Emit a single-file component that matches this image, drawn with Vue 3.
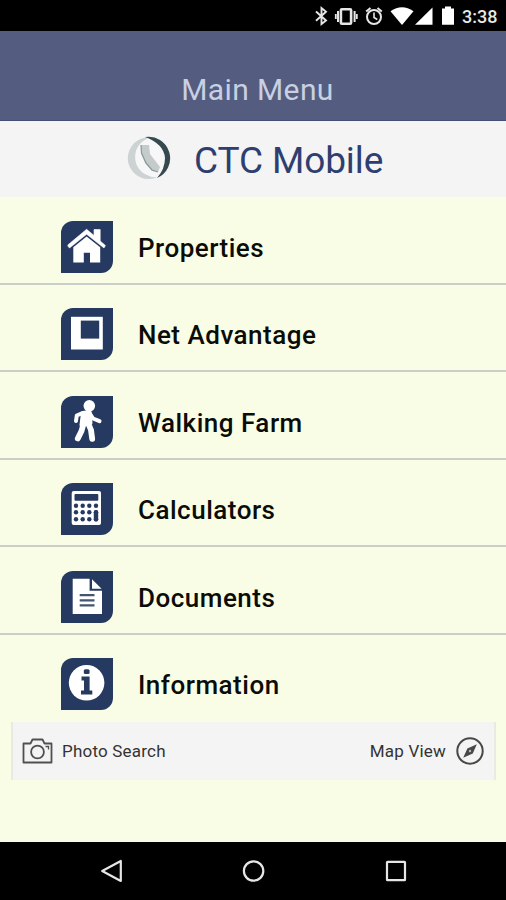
<script setup>
import { ref } from "vue";

const time = ref("3:38");

const menuItems = ref([
  { id: "properties", label: "Properties" },
  { id: "net", label: "Net Advantage" },
  { id: "farm", label: "Walking Farm" },
  { id: "calculators", label: "Calculators" },
  { id: "documents", label: "Documents" },
  { id: "information", label: "Information" }
]);

// Key positions on the calculator icon
const keyCols = [15, 21.7, 28.3, 35];
const keyRows = [22.7, 29.3, 36.3];
</script>

<template>
  <div class="screen">
    <div class="status">
      <svg width="146" height="31" viewBox="0 0 146 31">
        <g fill="none" stroke="#e6e6e6">
          <path d="M-0.5 11.5L9.5 20.5L5 24V8L9.5 11.8L-0.5 20.8" transform="translate(0.5 0)" stroke-width="1.9" />
          <rect x="25.5" y="9.2" width="10.2" height="14.6" rx="1" transform="translate(-0.6 0)" stroke-width="2.6" />
          <path d="M22 11V22M38.6 11V22" stroke-width="2" />
          <path d="M19.8 14V19M40.8 14V19" stroke-width="1.8" />
          <circle cx="58" cy="17" r="7" stroke-width="2" />
          <path d="M58 12.5V17.5L61.3 19.5" stroke-width="1.6" />
          <path d="M50.2 11.5L54.5 8M65.8 11.5L61.5 8" stroke-width="2" />
        </g>
        <g fill="#fff" transform="translate(-6 0)">
          <path d="M80.5 11.2Q92 3.2 103.5 11.2L92 25Z" />
          <path d="M122.5 7.5V24.8H105Z" />
          <path d="M132 8.5H135V6.5H141V8.5H144V24.8H132Z" />
        </g>
      </svg>
      <span class="time">{{ time }}</span>
    </div>

    <header class="header">Main Menu</header>

    <div class="brand">
      <svg class="logo" width="46" height="44" viewBox="0 0 46 44">
        <circle cx="22.5" cy="22" r="20.5" fill="#f7f7f7" />
        <path d="M20 1.2A21 21 0 1 0 31 41Q25 42 20 39A17.5 19 0 0 1 20 3Z" fill="#cdd2d3" />
        <path d="M18 1A21.5 21.5 0 0 1 30 42Q38 33 38 22Q37 8 18 1Z" fill="#35494f" />
        <path d="M14 9H22L23 18L33 31L31 36L25 35L18 27L14 17Z" fill="#c5caca" />
        <path d="M14 9L14.5 17L19 27L25 34L31 36" fill="none" stroke="#8e9898" stroke-width="1.2" />
      </svg>
      <span>CTC Mobile</span>
    </div>

    <ul class="menu">
      <li v-for="item in menuItems" :key="item.id">
        <span class="tile">
          <svg width="52" height="52" viewBox="0 0 52 52">
            <g v-if="item.id === 'properties'" fill="#fff">
              <path d="M7.2 25.6L6.8 24L25.6 8.3L33 14.5V8.5H39.2V20L44.4 24.5L43 27L25.6 13.2L8.5 27Z" stroke="#fff" stroke-width="0.6" />
              <path d="M12.3 26.3L25.6 15.6L39.2 26.3V41.6H29V31.7H22.8V41.6H12.3Z" />
            </g>
            <g v-else-if="item.id === 'net'">
              <rect x="10" y="8.8" width="31.8" height="32.7" fill="#fff" />
              <rect x="19.8" y="12.6" width="18.4" height="18" fill="#263a61" />
            </g>
            <g v-else-if="item.id === 'farm'" fill="none" stroke="#fff" stroke-linecap="round" stroke-linejoin="round">
              <circle cx="28.3" cy="9.8" r="5.8" fill="#fff" stroke="none" />
              <path d="M22 17L28.5 16L29.5 27L20.5 29Z" fill="#fff" stroke-width="4" />
              <path d="M21.5 17L15.8 19.5L15 25M28.5 17L32 22.5L38.5 25.2" stroke-width="4" />
              <path d="M22.5 28L20.5 35L16.8 42.5M27.5 28L30 34L31.2 42.8" stroke-width="5.8" />
            </g>
            <g v-else-if="item.id === 'calculators'">
              <rect x="10.7" y="8" width="29.3" height="34" rx="2" fill="#fff" />
              <rect x="13.5" y="11" width="23.8" height="6.8" rx="1" fill="#263a61" />
              <g fill="#263a61">
                <template v-for="y in keyRows">
                  <circle v-for="x in keyCols" :key="x + '-' + y" :cx="x" :cy="y" r="2.2" />
                </template>
                <rect x="32.8" y="27.1" width="4.4" height="11.4" rx="2.2" />
              </g>
            </g>
            <g v-else-if="item.id === 'documents'">
              <path d="M11.7 7.7H28.6V19.8H41V43H11.7Z" fill="#fff" />
              <path d="M31 8.2L40.6 17.8H31Z" fill="#fff" />
              <path d="M18.7 24.2H33.5M18.7 29.3H33.5M18.7 34.3H33.5" stroke="#46546f" stroke-width="2.3" />
            </g>
            <g v-else>
              <circle cx="25.6" cy="24.8" r="17.8" fill="#fff" />
              <rect x="22.8" y="11.2" width="5.8" height="4.8" rx="1.5" fill="#263a61" />
              <path d="M20.5 18.6H28.6V32.5H31.3V36.6H20V32.5H23V22.4H20.5Z" fill="#263a61" />
            </g>
          </svg>
        </span>
        <span class="label">{{ item.label }}</span>
      </li>
    </ul>

    <div class="tools">
      <button>
        <svg width="32" height="28" viewBox="0 0 32 28" fill="none" stroke="#505050" stroke-width="1.8">
          <path d="M1.5 6.5H8.5L10.5 2.5H20.5L22.5 6.5H29.5V25.5H1.5Z" stroke-linejoin="round" />
          <circle cx="15.5" cy="15" r="6.4" />
          <path d="M23.5 9.5H26.5V12.5" stroke-width="1.3" />
        </svg>
        <span>Photo Search</span>
      </button>
      <button class="map">
        <span>Map View</span>
        <svg width="28" height="28" viewBox="0 0 28 28">
          <circle cx="14" cy="14" r="12.7" fill="none" stroke="#484848" stroke-width="2" />
          <path d="M20.8 7.2L16.8 16.6L7.2 20.8L11.4 11.4Z" fill="#484848" />
          <circle cx="14" cy="14" r="1.2" fill="#bbb" />
        </svg>
      </button>
    </div>

    <nav class="navbar">
      <svg width="24" height="24" viewBox="0 0 24 24"><path d="M2.2 12L20.8 2V22Z" /></svg>
      <svg width="24" height="24" viewBox="0 0 24 24"><circle cx="11.6" cy="12" r="9.7" /></svg>
      <svg width="24" height="24" viewBox="0 0 24 24"><rect x="3" y="2.8" width="18" height="18.4" rx="0.5" /></svg>
    </nav>
  </div>
</template>

<style>
body {
  margin: 0;
}
</style>

<style scoped>
.screen {
  display: flex;
  flex-direction: column;
  width: 506px;
  height: 900px;
  background: #f9fde5;
  font-family: Roboto, "Liberation Sans", sans-serif;
  overflow: hidden;
}

.status {
  display: flex;
  align-items: center;
  justify-content: flex-end;
  height: 31px;
  padding-right: 9px;
  background: #000;
}

.status svg {
  overflow: visible;
}

.time {
  width: 35px;
  color: #e8e8e8;
  font-size: 18px;
  font-weight: 500;
  line-height: 31px;
  padding-top: 2px;
  white-space: nowrap;
}

.header {
  box-sizing: border-box;
  height: 90px;
  padding: 39px 0 0 9px;
  border-bottom: 1px solid #454e75;
  background: #545d7f;
  color: #c8d0e2;
  font-size: 30px;
  line-height: 40px;
  letter-spacing: 0.4px;
  text-align: center;
}

.brand {
  display: flex;
  align-items: center;
  gap: 21px;
  height: 76px;
  padding-left: 127px;
  background: #f4f4f4;
  color: #2f3e70;
  font-size: 37px;
}

.brand span {
  padding-top: 3px;
  letter-spacing: -0.1px;
}

.logo {
  margin-top: -2px;
}

.menu {
  list-style: none;
  margin: 0;
  padding: 0;
}

.menu li {
  box-sizing: border-box;
  display: flex;
  align-items: flex-start;
  gap: 25px;
  height: 87.5px;
  padding: 23.5px 0 0 61px;
  border-bottom: 2px solid #cbcdc9;
}

.menu li:last-child {
  border-bottom: none;
}

.tile {
  width: 52px;
  height: 52px;
  border-radius: 12px 0 12px 0;
  background: #263a61;
}

.tile svg {
  display: block;
}

.label {
  color: #0b0c08;
  font-size: 26px;
  font-weight: 500;
  line-height: 54px;
  letter-spacing: 0.5px;
}

.tools {
  box-sizing: border-box;
  display: flex;
  align-items: center;
  justify-content: space-between;
  height: 58px;
  margin: 0 10px 0 11px;
  padding: 0 10px 0 9px;
  border: 1px solid #e9ebe2;
  border-width: 0 2px;
  background: #f4f4f4;
}

button {
  display: flex;
  align-items: center;
  gap: 8px;
  padding: 0;
  border: none;
  background: none;
  color: #333;
  font-family: inherit;
  font-size: 17px;
  letter-spacing: 0.2px;
  cursor: pointer;
}

.map {
  gap: 10px;
}

.navbar {
  display: flex;
  align-items: center;
  justify-content: space-between;
  height: 58px;
  margin-top: auto;
  padding: 0 98px 0 100px;
  background: #000;
}

.navbar svg {
  fill: none;
  stroke: #e6e6e6;
  stroke-width: 2.2;
  stroke-linejoin: round;
}
</style>
